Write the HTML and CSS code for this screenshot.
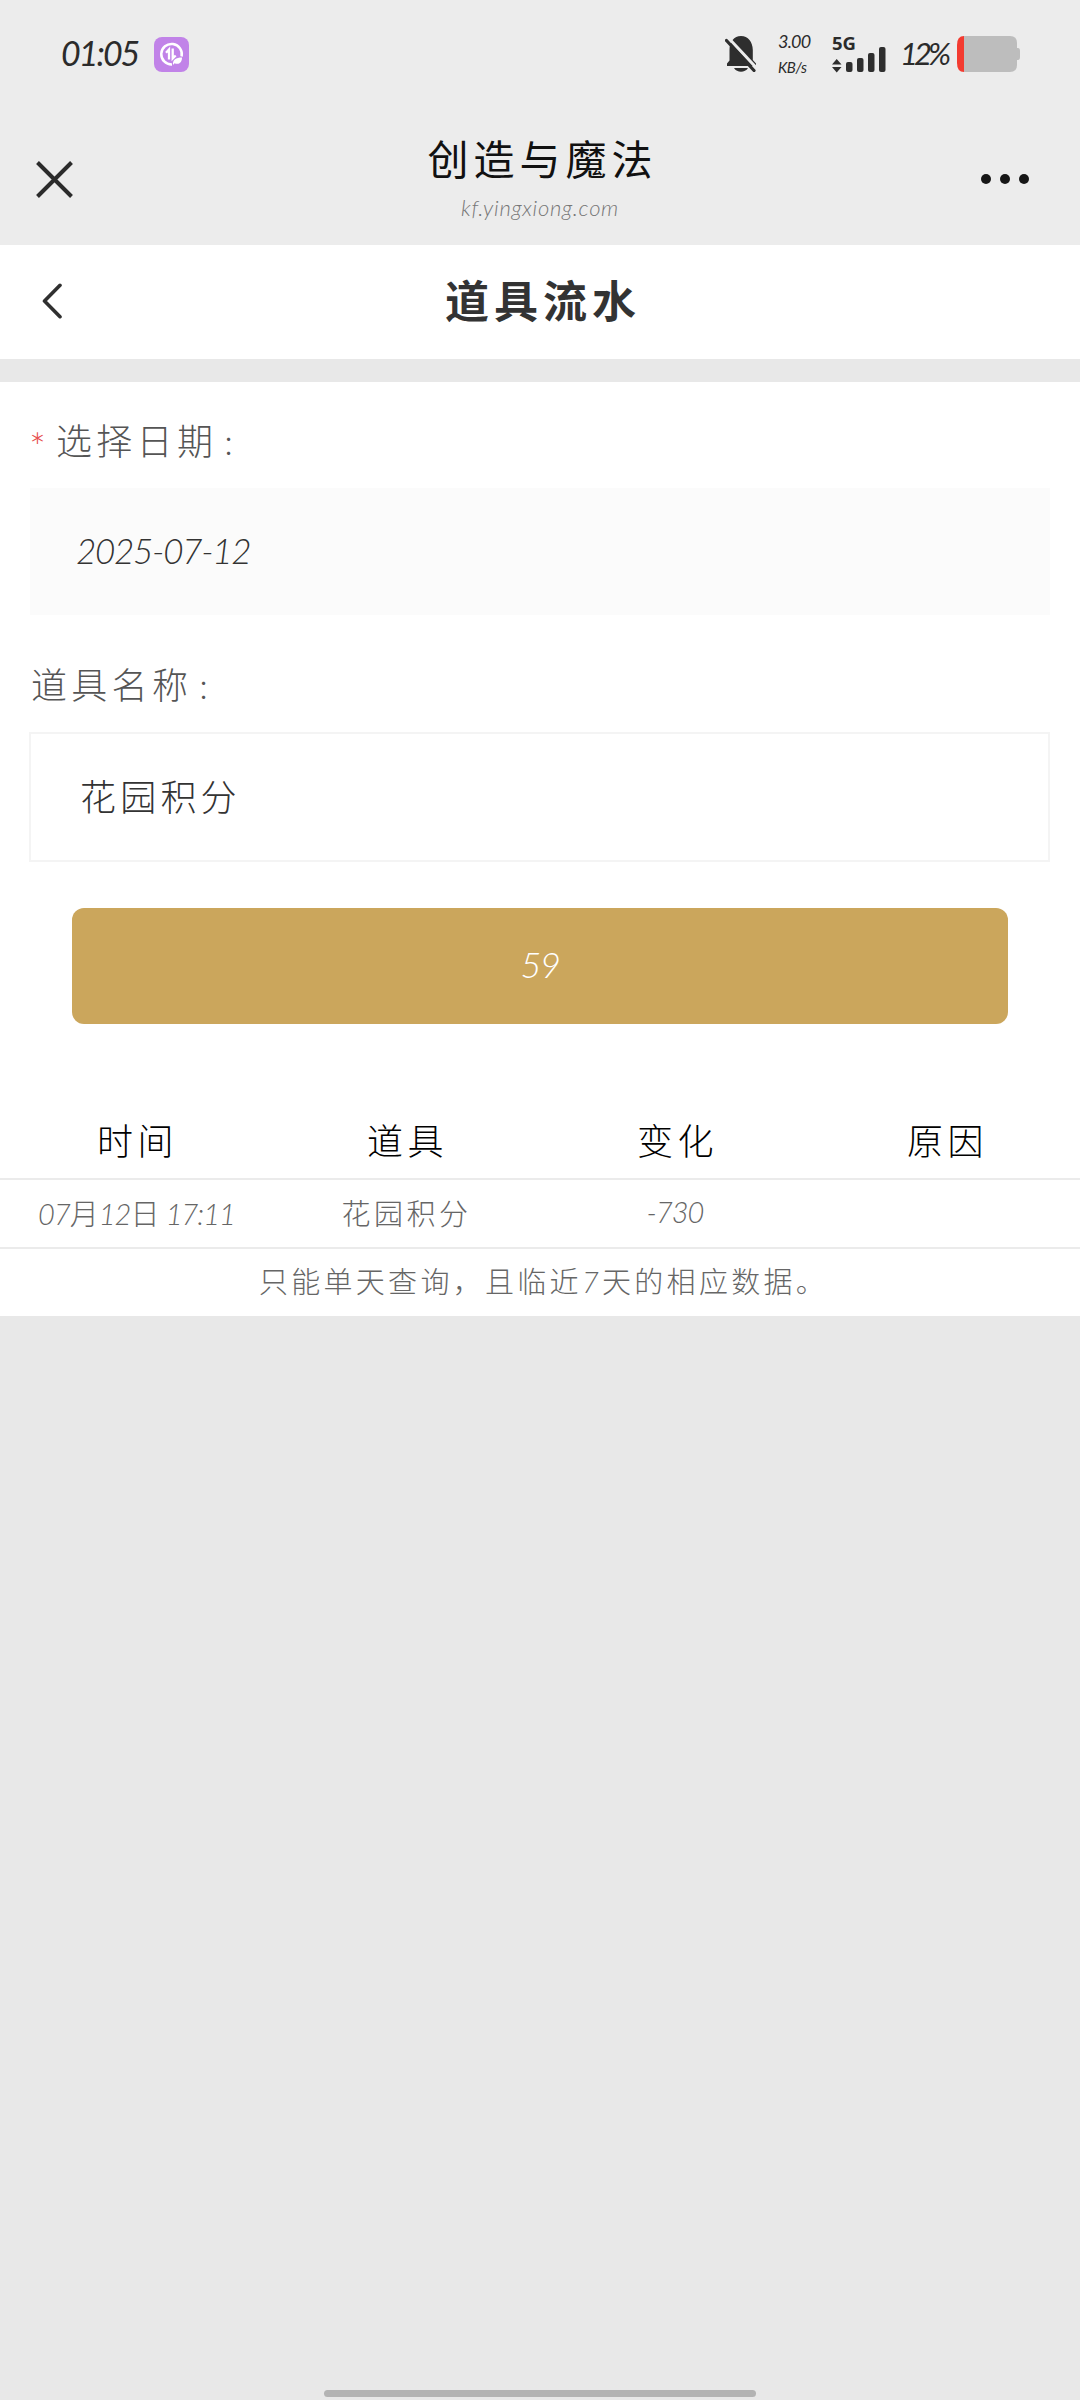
FILE: index.html
```html
<!DOCTYPE html>
<html lang="zh-CN">
<head>
<meta charset="utf-8">
<title>道具流水</title>
<link rel="stylesheet" href="styles.css">
</head>
<body>
<div class="status-bar">
  <div class="status-left">
    <span class="clock">01:05</span>
    <svg class="app-badge" viewBox="0 0 35 35">
      <rect width="35" height="35" rx="8" fill="#c183e8"/>
      <path d="M18 27.500A10.300 10.300 0 1 1 27.600 19.500" fill="none" stroke="#fff" stroke-width="2.500"/>
      <path d="M12 15.800 15 12.500V22.500M18.700 11.500V21.500L21.700 18.500" fill="none" stroke="#fff" stroke-width="2.300"/>
      <path d="M19 28C18.500 22.500 22 20.500 28 20.500C28 25.500 25 28 20.500 26.300Z" fill="#fff"/>
    </svg>
  </div>
  <div class="status-right">
    <svg class="bell" viewBox="0 0 32 36">
      <path d="M2 30V27.500L4.500 24.500V14C4.500 6 9 0 16 0S27.800 6 27.800 14V24L31 27.500V30Z" fill="#2e2e2e"/>
      <path d="M9 32H23C20 37 12 37 9 32Z" fill="#2e2e2e"/>
      <path d="M4 2.500 32 32.500" stroke="#ececec" stroke-width="3"/>
      <path d="M1.500 4.500 29 34.500" stroke="#2e2e2e" stroke-width="3.200" stroke-linecap="round"/>
    </svg>
    <div class="speed"><span>3.00</span><span class="unit">KB/s</span></div>
    <div class="network">
      <span class="network-type">5G</span>
      <svg class="signal" viewBox="0 0 54 26">
        <path d="M0 17.500 4.700 12 9.500 17.500ZM0 20 4.700 25.500 9.500 20Z" fill="#2e2e2e"/>
        <g fill="#2e2e2e"><rect x="14" y="15" width="6.500" height="10" rx="2"/><rect x="25" y="11" width="6.500" height="14" rx="2"/><rect x="36" y="6" width="6.500" height="19" rx="2"/><rect x="47" y="0" width="6.500" height="25" rx="2"/></g>
      </svg>
    </div>
    <span class="percent">12%</span>
    <svg class="battery" viewBox="0 0 63 36">
      <path d="M7 0H53Q60 0 60 7V12H61Q63 12 63 15V21Q63 24 61 24H60V29Q60 36 53 36H7Z" fill="#bdbdbd"/>
      <path d="M7 0V36Q0 36 0 27V9Q0 0 7 0Z" fill="#f33b30"/>
    </svg>
  </div>
</div>

<header class="app-bar">
  <svg class="close" viewBox="0 0 37 37"><path d="M1.500 1.500 35.500 35.500M35.500 1.500 1.500 35.500" stroke="#2b2b2b" stroke-width="4"/></svg>
  <div class="app-title">
    <h1>创造与魔法</h1>
    <p>kf.yingxiong.com</p>
  </div>
  <svg class="more" viewBox="0 0 50 12"><g fill="#161616"><circle cx="6" cy="6" r="5"/><circle cx="25" cy="6" r="5"/><circle cx="44" cy="6" r="5"/></g></svg>
</header>

<nav class="page-bar">
  <svg class="back" viewBox="0 0 20 36"><path d="M18 2.300 2.500 18 18 33.700" fill="none" stroke="#303030" stroke-width="3.600" stroke-linecap="round" stroke-linejoin="round"/></svg>
  <h2>道具流水</h2>
  <span class="page-bar-end"></span>
</nav>

<main class="content">
  <div class="label date-label"><span class="required">*</span><span>选择日期<span class="colon">:</span></span></div>
  <div class="field date-field"><span class="date">2025-07-12</span></div>
  <div class="label item-label"><span>道具名称<span class="colon">:</span></span></div>
  <div class="field item-field">花园积分</div>
  <button class="submit">59</button>
  <div class="table">
    <div class="row head"><span>时间</span><span>道具</span><span>变化</span><span>原因</span></div>
    <div class="row"><span class="time"><i>07</i>月<i>12</i>日<i> 17:11</i></span><span>花园积分</span><span class="amount">-730</span><span></span></div>
    <div class="note">只能单天查询，且临近<i>7</i>天的相应数据。</div>
  </div>
</main>
<div class="home-indicator"></div>
</body>
</html>
```

FILE: styles.css
```css
* { box-sizing: border-box; }
body {
  margin: 0;
  height: 2400px;
  display: flex;
  flex-direction: column;
  background: #e8e8e8;
  color: #333;
  font-family: "Lato", "Noto Sans CJK SC", sans-serif;
  font-weight: 300;
}
svg { display: block; flex: none; }
h1, h2, p { margin: 0; }
.status-bar {
  height: 108px;
  padding: 0 60px 0 61px;
  display: flex;
  justify-content: space-between;
  align-items: center;
  background: #ececec;
  color: #2b2b2b;
}
.status-left, .status-right { display: flex; align-items: center; }
.clock { width: 93px; padding-bottom: 3px; font-size: 34px; font-style: italic; font-weight: 400; letter-spacing: -2px; white-space: nowrap; }
.app-badge { width: 35px; height: 35px; }
.bell { width: 32px; height: 36px; }
.speed {
  width: 54px;
  margin-left: 21px;
  height: 44px;
  display: flex;
  flex-direction: column;
  justify-content: space-between;
  font-size: 18px;
  line-height: 18px;
  font-style: italic;
  font-weight: 400;
  letter-spacing: -0.8px;
}
.speed .unit { font-size: 15px; letter-spacing: -0.4px; }
.network { width: 54px; height: 36px; }
.network-type { display: block; height: 11px; font: 700 18.500px/14px "Open Sans", sans-serif; letter-spacing: 0; }
.signal { width: 54px; height: 26px; }
.percent { width: 57px; margin-left: 14px; padding-bottom: 3px; font-size: 31px; font-style: italic; font-weight: 400; letter-spacing: -4px; white-space: nowrap; }
.battery { width: 63px; height: 36px; }

.app-bar {
  height: 137px;
  padding: 0 50px 0 36px;
  display: grid;
  grid-template-columns: 50px 1fr 36px;
  background: #ececec;
}
.close { width: 37px; height: 37px; margin-top: 53px; }
.more { width: 50px; height: 12px; margin-top: 65px; justify-self: end; }
.app-title { text-align: center; padding-top: 22px; }
h1 { font-size: 41px; line-height: 60px; font-weight: 400; letter-spacing: 5px; padding-left: 5px; color: #111; }
.app-title p { font-size: 22px; line-height: 30px; margin-top: 3px; font-style: italic; letter-spacing: 0.7px; color: #777; }

.page-bar {
  height: 114px;
  padding: 0 42px;
  display: flex;
  align-items: center;
  justify-content: space-between;
  background: #fff;
}
.back { width: 20px; height: 36px; margin-top: -2px; }
.page-bar-end { width: 20px; }
h2 { font-size: 44px; line-height: 60px; font-weight: 700; letter-spacing: 5px; padding-left: 6px; margin-top: -3px; }

.content { margin-top: 23px; height: 934px; background: #fff; display: flex; flex-direction: column; }
.label { display: flex; align-items: center; font-size: 36px; line-height: 52px; letter-spacing: 4.300px; color: #555; }
.date-label { padding: 33px 29px 21px; }
.item-label { padding: 44px 31px 21px; }
.colon { padding-left: 7px; }
.required { width: 27px; color: #e64a4a; font-size: 40px; line-height: 36px; padding-top: 12px; }
.field { margin: 0 30px; display: flex; align-items: center; font-size: 36px; letter-spacing: 4.200px; }
.date-field { height: 127px; padding: 0 0 4px 46px; background: #fbfbfb; }
.date { font-style: italic; font-size: 35px; letter-spacing: -1.3px; }
.item-field { height: 130px; margin-left: 29px; padding: 0 0 5px 49px; border: 2px solid #f4f4f4; }
.submit {
  height: 116px;
  margin: 46px 72px 0;
  padding: 0 0 5px;
  border: 0;
  border-radius: 12px;
  background: #cba65c;
  color: #fff;
  font: italic 300 36px "Lato", sans-serif;
  letter-spacing: -1.5px;
}
.table { margin-top: 66px; color: #666; font-size: 29px; }
.row { display: grid; grid-template-columns: repeat(4, 270px); align-items: center; height: 69px; padding-bottom: 4px; border-bottom: 2px solid #ebebeb; text-align: center; letter-spacing: 3.500px; }
.row span { padding-left: 3px; }
.head { height: 90px; padding: 9px 0 0; font-size: 36px; letter-spacing: 4.500px; color: #000; }
.head span { padding-left: 5px; }
.row .time { letter-spacing: 0; white-space: nowrap; }
.row .time i { letter-spacing: -1px; }
.row .amount { font-style: italic; letter-spacing: -1px; padding-left: 0; }
.note { height: 67px; line-height: 66px; padding-left: 7px; text-align: center; letter-spacing: 3.300px; }
.home-indicator { width: 432px; height: 7px; margin: auto auto 3px; border-radius: 4px; background: #b3b3b3; }
```
